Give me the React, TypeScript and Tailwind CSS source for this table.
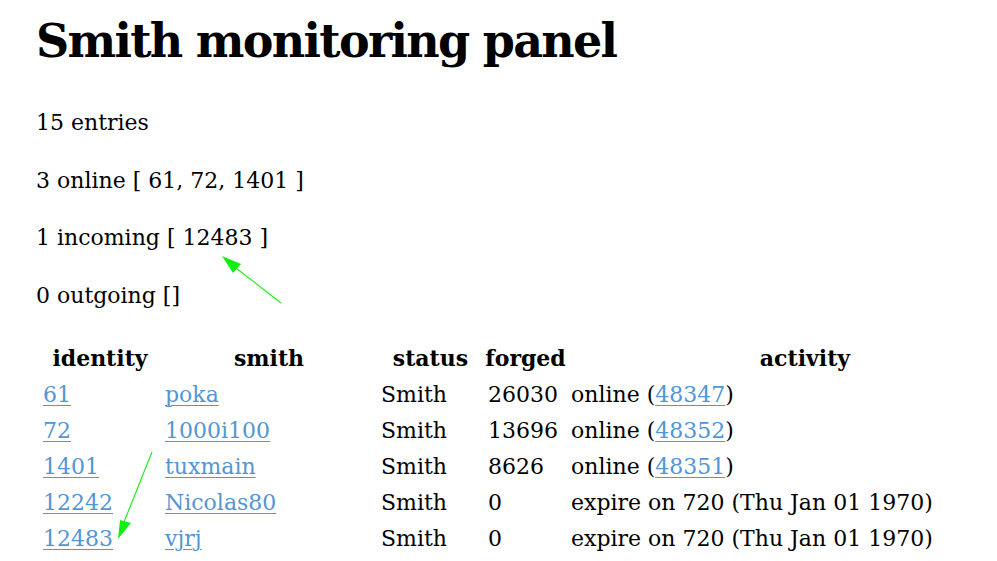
import React from 'react';

const serif = { fontFamily: '"DejaVu Serif", "Liberation Serif", serif' };

interface Row {
  id: string;
  smith: string;
  forged: string;
  block?: string;
  expire?: string;
}

const rows: Row[] = [
  { id: '61', smith: 'poka', forged: '26030', block: '48347' },
  { id: '72', smith: '1000i100', forged: '13696', block: '48352' },
  { id: '1401', smith: 'tuxmain', forged: '8626', block: '48351' },
  { id: '12242', smith: 'Nicolas80', forged: '0', expire: 'expire on 720 (Thu Jan 01 1970)' },
  { id: '12483', smith: 'vjrj', forged: '0', expire: 'expire on 720 (Thu Jan 01 1970)' },
];

const link = 'text-[#5296d5] underline decoration-1 underline-offset-[3px]';

export default function App() {
  return (
    <div className="relative w-[997px] h-[561px] overflow-hidden bg-white text-black" style={serif}>
      <div className="pl-[36px] pt-[13px]">
        <h1 className="text-[46px] leading-[56px] font-bold tracking-[-1.7px] whitespace-nowrap">Smith monitoring panel</h1>

        <div className="mt-[36px] flex flex-col gap-[21.5px] text-[22px] leading-[36px]">
          <p>15 entries</p>
          <p>3 online [ 61, 72, 1401 ]</p>
          <p>1 incoming [ 12483 ]</p>
          <p>0 outgoing []</p>
        </div>

        <table className="mt-[25px] ml-[3px] w-[1004px] min-w-[1004px] table-fixed border-collapse text-[22px] leading-[36px]">
          <colgroup>
            <col className="w-[122px]" />
            <col className="w-[216px]" />
            <col className="w-[107px]" />
            <col className="w-[83px]" />
            <col className="w-[476px]" />
          </colgroup>
          <thead>
            <tr className="h-[38px] font-bold">
              <th className="text-center">identity</th>
              <th className="text-center">smith</th>
              <th className="text-center">status</th>
              <th className="text-center whitespace-nowrap">forged</th>
              <th className="text-center">activity</th>
            </tr>
          </thead>
          <tbody>
            {rows.map((r) => (
              <tr key={r.id} className="h-[36px]">
                <td className="pl-[4px]"><a className={link}>{r.id}</a></td>
                <td className="pl-[4px]"><a className={link}>{r.smith}</a></td>
                <td className="pl-[4px]">Smith</td>
                <td className="pl-[4px]">{r.forged}</td>
                <td className="pl-[4px] whitespace-nowrap">
                  {r.block ? (
                    <>online (<a className={link}>{r.block}</a>)</>
                  ) : (
                    r.expire
                  )}
                </td>
              </tr>
            ))}
          </tbody>
        </table>
      </div>

      <svg className="absolute left-0 top-0 pointer-events-none" width="997" height="561">
        <line x1="281" y1="303" x2="232" y2="265" stroke="#22ee22" strokeWidth="1.2" />
        <polygon points="222,256 241,264 233,273" fill="#11ee11" />
        <line x1="152" y1="452" x2="124" y2="522" stroke="#22ee22" strokeWidth="1.2" />
        <polygon points="118,539 120,520 131,523" fill="#11ee11" />
      </svg>
    </div>
  );
}
